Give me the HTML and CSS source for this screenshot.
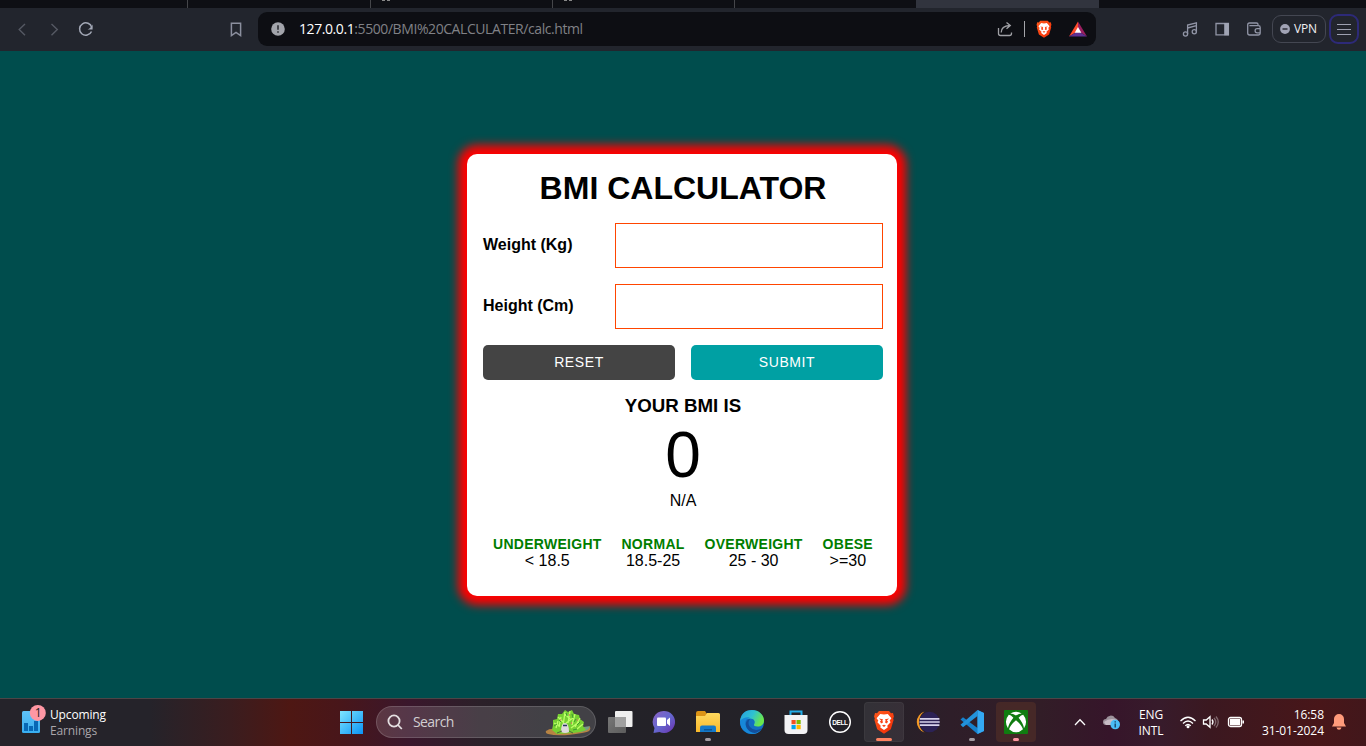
FILE: index.html
```html
<!DOCTYPE html>
<html lang="en">
<head>
<meta charset="utf-8">
<title>BMI Calculator</title>
<link rel="stylesheet" href="styles.css">
</head>
<body>
<svg class="defs" width="0" height="0">
  <defs>
    <linearGradient id="gBrave" x1="0" y1="0" x2="1" y2="1"><stop offset="0" stop-color="#ff5a1c"/><stop offset="1" stop-color="#f22c06"/></linearGradient>
    <linearGradient id="gWin" x1="0" y1="0" x2="1" y2="1"><stop offset="0" stop-color="#7fe6ff"/><stop offset="1" stop-color="#0a93f5"/></linearGradient>
    <linearGradient id="gFold" x1="0" y1="0" x2="0" y2="1"><stop offset="0" stop-color="#ffd95e"/><stop offset="1" stop-color="#f8b82b"/></linearGradient>
    <linearGradient id="gChat" x1="0" y1="0" x2="1" y2="1"><stop offset="0" stop-color="#8b62c4"/><stop offset="0.5" stop-color="#6568cf"/><stop offset="1" stop-color="#6b2fae"/></linearGradient>
    <linearGradient id="gEdge" x1="0" y1="0" x2="1" y2="0.4"><stop offset="0" stop-color="#269ee0"/><stop offset="0.55" stop-color="#2fc1d2"/><stop offset="1" stop-color="#6be84b"/></linearGradient>
    <linearGradient id="gWid" x1="0" y1="0" x2="0" y2="1"><stop offset="0" stop-color="#5fc2f8"/><stop offset="1" stop-color="#38aef0"/></linearGradient>
    <linearGradient id="gGray" x1="0" y1="0" x2="1" y2="1"><stop offset="0" stop-color="#777"/><stop offset="1" stop-color="#5c5c5c"/></linearGradient>
    <symbol id="lion" viewBox="0 0 20 24">
      <path d="M5 1h10l2 2.200 2-.2.9 3.400-.7 2.200.4 1.400-2.800 9.200L10 23.800 3.200 19.200.4 10l.4-1.400L.1 6.400 1 3l2 .2z" fill="url(#gBrave)"/>
      <path d="M10 4.600 6.200 4 2.600 8.200l1.700 2.300-.9 1.700 3.300 3.500-.4 1.700L10 20l3.700-2.600-.4-1.700 3.300-3.500-.9-1.700 1.700-2.300L13.800 4z" fill="#fff"/>
      <path d="M4.900 8.500 9 9.300 8.400 10.400l.6 2.200L7 13.600l-1-2.400 1.200-.7zM15.100 8.500 11 9.300l.6 1.100-.6 2.200 2 1 1-2.400-1.200-.7zM8 15.600 10 14.800l2 .8L10 17z" fill="#fb4316"/>
    </symbol>
  </defs>
</svg>

<div class="tabstrip">
  <span class="tab tab-first"></span><span class="tab"></span><span class="tab tab-mark"></span><span class="tab tab-mark"></span><span class="tab tab-plain"></span><span class="tab tab-active"></span>
</div>

<header class="toolbar">
  <nav class="nav-buttons">
    <svg width="32" height="24" viewBox="0 0 32 24" class="dim"><path d="M19 7 13.200 12.500 19 18.300"/></svg>
    <svg width="32" height="24" viewBox="0 0 32 24" class="dim"><path d="M13.500 7 19.300 12.500 13.500 18.300"/></svg>
    <svg width="32" height="24" viewBox="0 0 32 24" class="bright"><path d="M21.500 14.500A6.200 6.200 0 1 1 21.800 10.500"/><path d="M22.600 7.500v5h-5c2-1 4-2.500 5-5z" fill="#a3a8b6" stroke="none"/></svg>
  </nav>
  <svg class="bookmark" width="20" height="24" viewBox="0 0 20 24"><path d="M5.400 6.200h9.200v12.300L10 15.300 5.400 18.500z"/></svg>
  <div class="address">
    <svg width="14" height="14" viewBox="0 0 14 14"><circle cx="7" cy="7" r="6.800" fill="#a2a4ab"/><path d="M7 3.300v4.400M7 9.200v1.500" stroke="#33353b" stroke-width="1.700"/></svg>
    <div class="url"><b>127.0.0.1</b>:5500/BMI%20CALCULATER/calc.html</div>
    <svg class="share" width="16" height="16" viewBox="0 0 16 16"><path d="M1.500 7v5.500q0 2 2 2h9q2 0 2-2V11.500M4.200 11.500q0-6.500 8.500-7M9.500 1.500l3.800 3-3.800 3.300" /></svg>
    <span class="divider"></span>
    <svg class="shield" width="16" height="18"><use href="#lion" width="16" height="18"/></svg>
    <svg class="bat" width="18" height="16" viewBox="0 0 18 16"><path d="M9 .5 0 15.500 9 10z" fill="#ff4b2b"/><path d="M9 .5 18 15.500 9 10z" fill="#9b1f60"/><path d="M0 15.500h18L9 10z" fill="#5f3193"/><path d="M9 6 5.700 11.800h6.600z" fill="#fff"/></svg>
  </div>
  <div class="actions">
    <svg width="32" height="24" viewBox="0 0 32 24"><circle cx="11.500" cy="17" r="2.100"/><circle cx="20.300" cy="14.800" r="2.100"/><path d="M13.600 17V8l8.800-2.200v9M13.600 11l8.800-2.400"/></svg>
    <svg width="32" height="24" viewBox="0 0 32 24"><path d="M10 6.500h12.400v11.300H10z"/><path d="M18.200 6h4.700v12.300h-4.700z" fill="#a0a4b4" stroke="none"/></svg>
    <svg width="32" height="24" viewBox="0 0 32 24"><path d="M20 8.500V7.200Q20 6 18.500 6h-7Q9.700 6 9.700 8v8q0 2 2 2h8.700q1.800 0 1.800-1.800V10.500q0-1.800-1.800-1.800h-9M22.500 11.600h-3.300a2.100 2.100 0 0 0 0 4.200h3.300"/></svg>
  </div>
  <div class="vpn"><svg width="10" height="10" viewBox="0 0 10 10"><circle cx="5" cy="5" r="4.900" fill="#a1a3b5"/><path d="M2.500 5h5" stroke="#23252d" stroke-width="1.400"/></svg><span>VPN</span></div>
  <div class="menu"><i></i><i></i><i></i></div>
</header>

<main class="page">
  <section class="card">
    <h1>BMI CALCULATOR</h1>
    <form class="form">
      <label for="w">Weight (Kg)</label><input id="w" type="text">
      <label for="h">Height (Cm)</label><input id="h" type="text">
    </form>
    <div class="buttons">
      <button type="button" class="reset">RESET</button>
      <button type="button" class="submit">SUBMIT</button>
    </div>
    <h2>YOUR BMI IS</h2>
    <div class="value">0</div>
    <div class="status">N/A</div>
    <div class="ranges">
      <div><b>UNDERWEIGHT</b><span>&lt; 18.5</span></div>
      <div><b>NORMAL</b><span>18.5-25</span></div>
      <div><b>OVERWEIGHT</b><span>25 - 30</span></div>
      <div><b>OBESE</b><span>&gt;=30</span></div>
    </div>
  </section>
</main>

<footer class="taskbar">
  <div class="widget">
    <svg width="26" height="32" viewBox="0 0 26 32"><rect x="2" y="7" width="18" height="22" rx="1.500" fill="url(#gWid)"/><path d="M4 19h4v8H4zM9 22h4v5H9zM14 17h4v10h-4z" fill="#0868b5"/><circle cx="17.800" cy="8.900" r="8" fill="#ff97a4"/><text x="18.300" y="13" class="badge">1</text></svg>
    <div class="widget-text"><span>Upcoming</span><span class="sub">Earnings</span></div>
  </div>
  <div class="slot start"><svg width="24" height="24" viewBox="0 0 24 24"><path d="M1 1H12V12H1zM13 1h11v11H13zM1 13H12V24H1zM13 13h11v11H13z" fill="url(#gWin)"/></svg></div>
  <div class="search">
    <svg width="16" height="16" viewBox="0 0 16 16" class="glass"><circle cx="7" cy="7" r="5.600"/><path d="m11 11 3.800 4"/></svg>
    <span>Search</span>
    <svg class="hedgehog" width="48" height="28" viewBox="0 0 48 28">
      <path d="M2 23Q7 19 16 22l30-3q2 5-8 6-22 4-34 1-3-1-2-3z" fill="#b78343"/><path d="M30 20q11-1 16-2-1 6-13 6z" fill="#789b84"/>
      <path d="M8 22l1-5 0-5 4-1 1-5 4 0 3-4 3 2 4-2 2 4 5 1 1 4 4 3-1 4 3 4-6 2-7 1-16 1z" fill="#76cf32"/>
      <path d="M12 20l2-7m1 6 2-10m2 9 2-14m3 11 2-12m2 14 3-11m0 13 5-9m-3 11 6-5M10 15l6 3m-2-9 5 5m2-8 6 6m-5 3 7-5m-2 10 8-6" stroke="#bcff68" stroke-width="1.300"/>
      <path d="M10 18l3-2m2-4 2 2m5-9 1 3m5-2 1 4m3 1-2 3m6 0-3 3m-9 2-3-2m8 5 4-1" stroke="#3d9a30" stroke-width="1"/>
      <path d="M16 12h1m8-5h1m7 5h1m-7 3h1" stroke="#d57762" stroke-width="1.500"/>
      <path d="M17 24q0-9 4-9t4 9q-4 2-8 0z" fill="#ded9dd"/><path d="M19 17.500h4" stroke="#27365f" stroke-width="1.500"/><path d="M18 23l-5 2m12-2 4 2" stroke="#4e633b"/>
    </svg>
  </div>
  <div class="apps">
    <div class="slot"><svg width="26" height="24" viewBox="0 0 26 24"><rect x="8" y="1" width="17.500" height="16" rx="1" fill="#efefef"/><rect x="1" y="7" width="18" height="16" rx="1" fill="url(#gGray)"/><path d="M8 7h11v10H8z" fill="#a0a0a0"/></svg></div>
    <div class="slot"><svg width="24" height="24" viewBox="0 0 24 24"><path d="M11.500 1a11 11 0 1 1-4 21l-6 1 1-5A11 11 0 0 1 11.500 1z" fill="url(#gChat)"/><rect x="5" y="7.500" width="9" height="8.500" rx="1" fill="#fff"/><path d="m15 10 3-2.500v8.500l-3-2.500z" fill="#fff"/></svg></div>
    <div class="slot"><svg width="26" height="24" viewBox="0 0 26 24"><path d="M1 3q0-2 2-2h7l2 3h4v3H1z" fill="#dc9416"/><path d="M1 6h9l2-3h11.500q1.500 0 1.500 1.500V22H1z" fill="url(#gFold)"/><path d="M5 22v-4.500q0-2 2-2h12q2 0 2 2V22z" fill="#1479c9"/><path d="M9 19h8v1.500H9z" fill="#0a5597"/></svg><i class="run"></i></div>
    <div class="slot"><svg width="26" height="26" viewBox="0 0 26 26"><circle cx="13" cy="13" r="12" fill="#136fc2"/><path d="M1 12C2 4 7 1 13 1c7 0 12 5 12 10.500 0 4-3 6-6.500 6-2.500 0-4-1-3.500-2 2-3 0-6-4-6-5 0-8.500 2-10 2.500z" fill="url(#gEdge)"/><path d="M11 8.500C5 10 5 17 10 21q5 4 12 0-4 5-11 3.800C5 23.500 1 19 1 12q4-4.500 10-3.500z" fill="#1788d9"/><path d="M11 10q-3 4 0 8 4 5 12 1.500-6 7-12 3C4 18 7 10 11 10z" fill="#124f9c"/></svg></div>
    <div class="slot"><svg width="26" height="26" viewBox="0 0 26 26"><path d="M7.500 7V2.500h11V7" fill="none" stroke="#22aeea" stroke-width="2"/><path d="M1.500 6h23v15q0 4-4 4h-15q-4 0-4-4z" fill="#f3f3f5"/><path d="M8.500 11h4.200v4.200H8.500z" fill="#f25022"/><path d="M13.500 11h4.200v4.200h-4.200z" fill="#7fba00"/><path d="M8.500 16h4.200v4.200H8.500z" fill="#00a4ef"/><path d="M13.500 16h4.200v4.200h-4.200z" fill="#ffb900"/></svg></div>
    <div class="slot"><svg width="24" height="24" viewBox="0 0 24 24"><circle cx="12" cy="12" r="10.300" fill="none" stroke="#fff" stroke-width="1.400"/><text x="12" y="14.500" class="dell">DELL</text></svg></div>
    <div class="slot active"><svg width="20" height="24"><use href="#lion" width="20" height="24"/></svg><i class="run wide"></i></div>
    <div class="slot"><svg width="26" height="24" viewBox="0 0 26 24"><circle cx="14.500" cy="12" r="10.300" fill="#2c2255"/><path d="M9.500 1.500A11 11 0 0 0 9.500 22.500Q4 18.500 4 12T9.500 1.500z" fill="#f59a25"/><path d="M4.800 8.900h19.600M4.500 12h20.200M4.800 15.100h19.600" stroke="#d8d3ec" stroke-width="1.700"/></svg></div>
    <div class="slot"><svg width="26" height="26" viewBox="0 0 26 26"><path d="M18.500 1 25 4v18l-6.500 3L1.500 10.500l2.500-2.300L18.500 19z" fill="#1680cb"/><path d="M18.500 1v6L4 18.200l-2.500-2.400z" fill="#2292db"/><path d="M18.500 1 25 4v18l-6.500 3z" fill="#34a8f2"/></svg><i class="run"></i></div>
    <div class="slot xbox"><svg width="24" height="24" viewBox="0 0 24 24"><rect width="24" height="24" rx="1" fill="#107c10"/><path d="M6.200 3.400Q12 .2 17.800 3.400 15.500 3.200 12 5.400 8.500 3.200 6.200 3.400zM4.800 4.800Q6.800 4.800 9.400 7.700 4.800 13 4 18.300-.5 11 4.800 4.800zM19.200 4.800Q17.200 4.800 14.600 7.700 19.200 13 20 18.300 24.500 11 19.200 4.800zM12 10.200Q17.500 14.800 19 19.200 12 25.500 5 19.200 6.500 14.800 12 10.200z" fill="#fff"/></svg><i class="run pink"></i></div>
  </div>
  <div class="tray">
    <svg class="chev" width="14" height="10" viewBox="0 0 14 10"><path d="m2 8 5-5.200L12 8"/></svg>
    <svg class="cloud" width="18" height="16" viewBox="0 0 18 16"><path d="M3 11a3 3 0 0 1 0-6 5 5 0 0 1 9-1 4 4 0 0 1 3 5l-6 2z" fill="#9d929b"/><path d="M1 8q6-5 13-2l-5 5H3z" fill="#c7bcc5"/><circle cx="12.200" cy="10.500" r="4.800" fill="#4abdf7"/><path d="M12.200 9.500v4M12.200 7.300v1.300" stroke="#143b5c" stroke-width="1.300"/></svg>
    <div class="lang"><span>ENG</span><span>INTL</span></div>
    <svg class="wifi" width="18" height="14" viewBox="0 0 18 14"><path d="M1.500 6Q9-1.500 16.500 6M4 8.500q5-5 10 0M6.300 10.800q2.700-2.700 5.400 0"/><circle cx="9" cy="11.800" r="1.500" fill="#fff" stroke="none"/></svg>
    <svg class="volume" width="18" height="14" viewBox="0 0 18 14"><path d="M1.500 5h2.700L8 1.700v10.600L4.200 9H1.500z"/><path d="M10 4.500q2 2.500 0 5"/><path d="M12 3q3.500 4 0 8M14 1.500q4.500 5.500 0 11" opacity=".35"/></svg>
    <svg class="battery" width="18" height="12" viewBox="0 0 18 12"><rect x="1.500" y="1.500" width="13" height="9" rx="2"/><path d="M3.500 3.500h9v5h-9z" fill="#fff"/><path d="M16.200 4.500v3" stroke-width="1.600"/></svg>
    <div class="clock"><span>16:58</span><span>31-01-2024</span></div>
    <svg class="bell" width="14" height="16" viewBox="0 0 14 16"><path d="M7 0a5 5 0 0 1 5 5v4l2 3.500H0L2 9V5a5 5 0 0 1 5-5zM4.500 13.500h5Q9 15.700 7 15.700t-2.500-2.200z" fill="#ff9b7b"/></svg>
  </div>
</footer>
</body>
</html>
```
FILE: styles.css
```css
* { box-sizing: border-box; }
body {
  margin: 0;
  width: 1366px;
  height: 746px;
  overflow: hidden;
  display: flex;
  flex-direction: column;
  font-family: "Liberation Sans", Arial, sans-serif;
}
svg { display: block; flex: none; }
.defs { position: absolute; }

.tabstrip { display: flex; height: 8px; background: #0e0f14; flex: none; }
.tab { width: 182px; border-right: 1px solid #45464a; }
.tab-first { width: 188px; }
.tab:nth-child(2) { width: 183px; }
.tab-mark::before { content: ""; display: block; width: 8px; height: 1px; margin-left: 11px; background: linear-gradient(90deg, #888 3px, transparent 3px 5px, #888 5px); }
.tab-plain { width: 181px; border: 0; }
.tab-active { width: 183px; border: 0; background: #31343e; }

.toolbar { display: flex; align-items: center; height: 43px; background: #22252d; flex: none; padding: 0 7px 1px 6px; font-family: "Open Sans", sans-serif; }
.toolbar svg { fill: none; }
.nav-buttons { display: flex; }
.dim { stroke: #555963; stroke-width: 1.4; }
.bright { stroke: #a3a8b6; stroke-width: 1.5; }
.bookmark { margin-left: 124px; stroke: #8b8f9e; stroke-width: 1.5; }
.address { display: flex; align-items: center; width: 838px; height: 34px; margin-left: 12px; padding: 0 9px 0 13px; background: #0d0e13; border-radius: 9px; }
.url { flex: 1; margin-left: 14px; padding-bottom: 1px; color: #808186; font-size: 14px; letter-spacing: -0.42px; white-space: nowrap; }
.url b { color: #fff; font-weight: 400; }
.share { stroke: #a0a1a6; stroke-width: 1.3; }
.divider { width: 1px; height: 16px; margin: 0 11px; background: #a4a5aa; }
.bat { margin-left: 17px; }
.actions { display: flex; margin-left: 78px; stroke: #9195a6; stroke-width: 1.3; }
.vpn { display: flex; align-items: center; gap: 4px; width: 54px; height: 28px; margin-left: 2px; padding: 0 0 1px 7px; border: 1px solid #444752; border-radius: 9px; color: #f0f0f3; font-size: 12px; letter-spacing: -0.2px; }
.menu { display: flex; flex-direction: column; justify-content: center; align-items: center; gap: 4px; width: 30px; height: 30px; margin-left: 3px; border: 2px solid #2d2a78; border-radius: 9px; }
.menu i { width: 14px; height: 1px; background: #9da0b0; }

.page { height: 647px; flex: none; background: #004d4d; padding: 103px 0 0 467px; overflow: hidden; }
.card { width: 430px; height: 442px; padding: 16px 14px 0 16px; background: #fff; border-radius: 10px; box-shadow: 0 0 10px 9px #f00; text-align: center; color: #000; }
.card h1 { margin: 0 0 16px; font-size: 32px; line-height: 37px; }
.form { display: grid; grid-template-columns: 132px 268px; row-gap: 16px; align-items: center; text-align: left; }
.form label { font-weight: 700; font-size: 16px; padding-bottom: 1px; }
.form input { width: 268px; height: 45px; border: 1px solid #ff4500; background: #fff; padding: 0 8px; }
.buttons { display: grid; grid-template-columns: 192px 192px; gap: 16px; margin-top: 16px; }
.buttons button { height: 35px; border: 0; border-radius: 5px; color: #fff; font: 14px "Liberation Sans", Arial, sans-serif; letter-spacing: 0.6px; padding: 0 0 2px; }
.reset { background: #444; }
.submit { background: #00a0a3; }
.card h2 { margin: 15px 0 0; font-size: 18.72px; line-height: 22px; }
.value { margin-top: 1px; font-size: 64px; line-height: 74px; }
.status { font-size: 16px; line-height: 18px; }
.ranges { display: flex; justify-content: space-between; margin-top: 26px; padding: 0 10px 0 10px; }
.ranges div { display: flex; flex-direction: column; }
.ranges b { color: #007d00; font-size: 14px; line-height: 17px; letter-spacing: 0.28px; }
.ranges span { font-size: 16px; line-height: 16px; }

.taskbar {
  display: flex; align-items: center; height: 48px; flex: none; color: #fff; padding-bottom: 1px;
  border-top: 1px solid #4b4547; font-family: "Open Sans", sans-serif;
  background: linear-gradient(90deg, #25232a 0, #25232a 150px, #3a1d1f 230px, #4e1713 290px, #48161a 340px, #3a172c 410px, #2b2029 480px, #232228 550px, #242228 870px, #2e1e29 950px, #321d27 1040px, #36152a 1110px, #371b2b 1160px, #3b1820 1210px, #481619 1320px, #42171b 1366px);
}
.widget { display: flex; align-items: center; width: 329px; padding-left: 20px; }
.widget svg { margin-top: -5px; }
.widget-text { display: flex; flex-direction: column; margin-left: 4px; padding-top: 1px; font-size: 12px; line-height: 16px; letter-spacing: -0.15px; }
.widget-text .sub { color: #aaa6aa; }
.badge { font: 12px "Open Sans", sans-serif; text-anchor: middle; fill: #1c1c1c; }
.slot { position: relative; display: flex; align-items: center; justify-content: center; width: 44px; height: 40px; }
.search { display: flex; align-items: center; width: 220px; height: 32px; margin-left: 3px; padding: 0 3px 0 10px; border: 1px solid rgba(255,255,255,.15); border-radius: 16px; background: rgba(255,255,255,.14); font-size: 14px; color: #d2ced1; }
.search span { flex: 1; margin-left: 10px; padding-bottom: 1px; letter-spacing: -0.6px; }
.glass { fill: none; stroke: #e4dfe1; stroke-width: 1.8; }
.apps { display: flex; margin-left: 2px; }
.dell { font: 700 6.5px "Liberation Sans", Arial, sans-serif; letter-spacing: -0.4px; text-anchor: middle; fill: #fff; }
.active::before, .xbox::before { content: ""; position: absolute; inset: 0 2px; border-radius: 4px; background: rgba(255,255,255,.07); border: 1px solid rgba(255,255,255,.04); }
.xbox::before { background: rgba(120,65,40,.3); border-color: transparent; }
.active svg, .xbox svg { position: relative; }
.run { position: absolute; left: 19px; bottom: 1px; width: 6px; height: 3px; border-radius: 2px; background: #a49da3; }
.run.wide { left: 14px; width: 16px; background: #ff8261; }
.run.pink { background: #ff97a4; }
.tray { display: flex; align-items: center; margin-left: 35px; font-size: 12px; line-height: 16px; }
.tray svg { fill: none; stroke: #fff; stroke-width: 1.3; }
.tray .cloud, .tray .bell { stroke: none; }
.cloud { margin-left: 16px; }
.lang { display: flex; flex-direction: column; align-items: center; width: 34px; margin-left: 13px; padding-top: 2px; letter-spacing: -0.1px; }
.wifi { margin-left: 11px; }
.volume { margin-left: 5px; }
.battery { margin-left: 7px; }
.clock { display: flex; flex-direction: column; align-items: flex-end; width: 79px; padding-top: 1px; letter-spacing: -0.05px; }
.bell { margin-left: 8px; }
```
